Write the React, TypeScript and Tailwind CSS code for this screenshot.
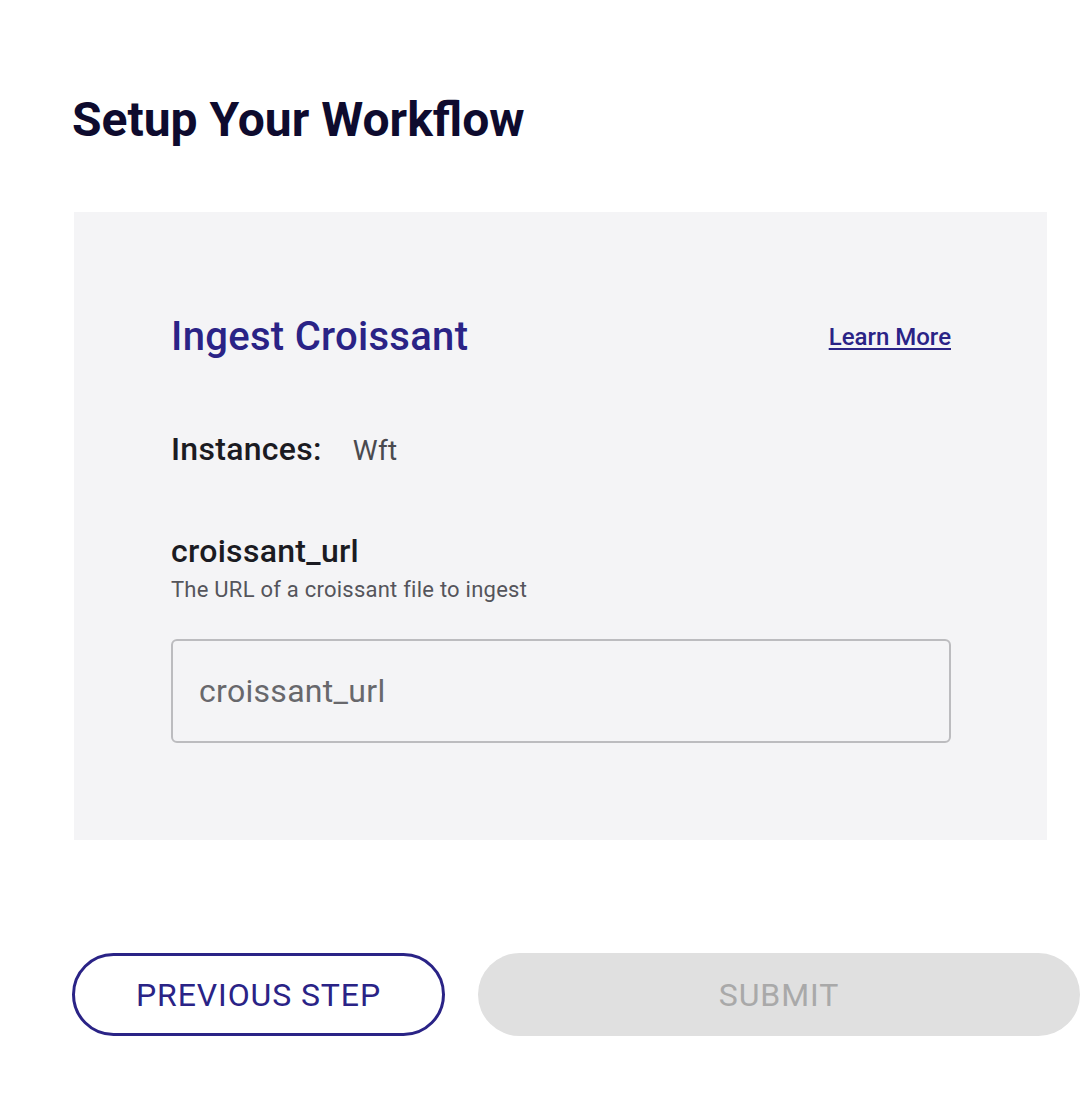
export default function App() {
  return (
    <div className="min-h-screen bg-white font-['Roboto',sans-serif]">
      <div className="pl-[72px] pt-[92px]">
        <h1 className="text-[48px] leading-[56px] font-bold text-[#0e0b2e]">Setup Your Workflow</h1>

        <section className="mt-[64px] ml-[2px] w-[973px] bg-[#f4f4f6] pl-[97px] pr-[96px] pt-[101px] pb-[97px]">
          <header className="flex items-center justify-between">
            <h2 className="text-[40px] leading-[48px] font-medium tracking-[0.3px] text-[#2a2386]">Ingest Croissant</h2>
            <a href="#" className="text-[24px] leading-[28px] font-medium text-[#2a2386] underline underline-offset-[3px]">
              Learn More
            </a>
          </header>

          <div className="mt-[70px] flex items-baseline gap-[31px]">
            <span className="text-[32px] leading-[36px] font-medium tracking-[0.3px] text-[#1b1b22]">Instances:</span>
            <span className="text-[28px] leading-[36px] tracking-[0.3px] text-[#4a4a4f]">Wft</span>
          </div>

          <div className="mt-[64px]">
            <div className="text-[32px] leading-[36px] font-medium tracking-[0.3px] text-[#1b1b22]">croissant_url</div>
            <div className="mt-[8px] text-[22px] leading-[26px] tracking-[0.24px] text-[#55555b]">The URL of a croissant file to ingest</div>
            <input
              placeholder="croissant_url"
              className="mt-[36px] block h-[104px] w-full rounded-[6px] border-2 border-[#bcbcbf] bg-transparent px-[26px] text-[32px] tracking-[0.3px] text-[#333] placeholder:text-[#68686c] outline-none"
            />
          </div>
        </section>

        <div className="mt-[113px] flex gap-[33px]">
          <button className="h-[83px] w-[373px] rounded-full border-[3px] border-[#2a2386] bg-white text-[32px] tracking-[0.9px] text-[#2a2386]">
            PREVIOUS STEP
          </button>
          <button disabled className="h-[83px] w-[602px] shrink-0 rounded-full bg-[#e0e0e0] text-[32px] tracking-[0.9px] text-[#a9a9a9]">
            SUBMIT
          </button>
        </div>
      </div>
    </div>
  );
}
